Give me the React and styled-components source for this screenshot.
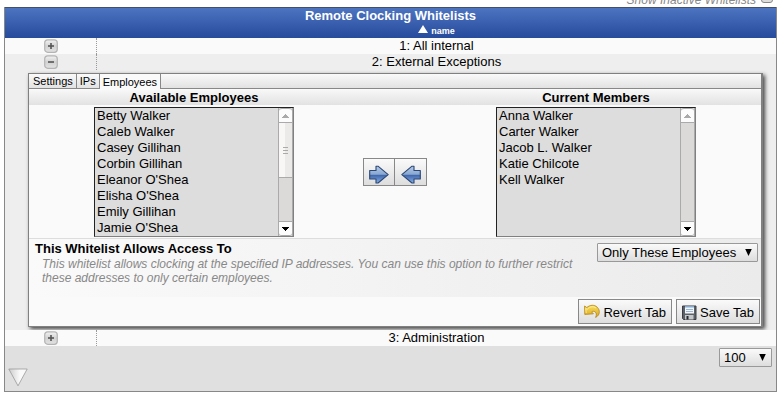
import React, { useState } from 'react';
import styled, { createGlobalStyle } from 'styled-components';

const GlobalStyle = createGlobalStyle`
  *, *::before, *::after {
    box-sizing: border-box;
  }

  body {
    margin: 0;
    background: #fff;
    color: #000;
    font-family: 'Liberation Sans', Arial, Helvetica, sans-serif;
    font-size: 13px;
    line-height: 16px;
  }

  button, select, input {
    margin: 0;
    color: inherit;
    font: inherit;
  }
`;

const Page = styled.main`
  padding: 0 4px;
  overflow: hidden;
`;

const Toolbar = styled.div`
  display: flex;
  justify-content: flex-end;
  align-items: flex-end;
  height: 7px;
`;

const InactiveToggle = styled.label`
  display: flex;
  align-items: flex-end;
  gap: 5px;
  padding-right: 4px;
  color: #888;
  font-size: 12px;
  font-style: italic;
  line-height: 14px;
  white-space: nowrap;
`;

const CheckBox = styled.input`
  appearance: none;
  width: 12px;
  height: 12px;
  margin-bottom: 4px;
  border: 1px solid #888;
  border-radius: 3px;
  background: #ddd;
`;

const Table = styled.table`
  width: 100%;
  border: 1px solid #888;
  border-top: 0;
  border-spacing: 0;
  table-layout: fixed;
`;

const ToggleCol = styled.col`
  width: 92px;
`;

const HeadCell = styled.th`
  height: 31px;
  padding: 0;
  border-top: 1px solid #445068;
  background: linear-gradient(#4c74c0, #264a9c);
  color: #fff;
  font-weight: bold;
`;

const SortLink = styled.a`
  display: flex;
  justify-content: center;
  align-items: center;
  gap: 3px;
  height: 14px;
  padding-left: 92px;
  color: #fff;
  font-size: 9px;
  line-height: 14px;
  text-decoration: none;

  svg {
    margin-bottom: 4px;
  }
`;

const Row = styled.tr`
  background: ${({ $shade }) => ($shade ? '#eee' : '#fafafa')};
`;

const Cell = styled.td`
  height: 16px;
  padding: 0;
  text-align: center;
`;

const ToggleCell = styled(Cell)`
  border-right: 1px dotted #999;
`;

const ToggleButton = styled.button`
  display: block;
  width: 14px;
  height: 14px;
  margin: 0 auto;
  padding: 0;
  border: 0;
  background: none;

  svg {
    display: block;
  }
`;

const DetailCell = styled.td`
  padding: 3px 13px 3px 23px;
  overflow: hidden;
`;

const Panel = styled.section`
  border: 1px solid #808080;
  border-right-width: 2px;
  background: #fafafa;
  box-shadow: 2px 2px 4px #444;
`;

const TabBar = styled.div`
  display: flex;
  height: 15px;
  border-bottom: 1px solid #888;
  background: linear-gradient(#fafafa, #e2e2e2);
`;

const Tab = styled.button`
  height: ${({ $active }) => ($active ? 15 : 14)}px;
  padding: 0 3px;
  border: 0;
  border-right: 1px solid #888;
  background: ${({ $active }) => ($active ? '#fafafa' : 'transparent')};
  font-size: 11px;
  line-height: 14px;

  &:first-child {
    padding-left: 4px;
  }
`;

const Transfer = styled.div`
  display: grid;
  grid-template-columns: 1fr 72px 1fr;
  border-bottom: 1px solid #ddd;
`;

const ListHeading = styled.label`
  height: 16px;
  border-top: 1px solid #fafafa;
  background: linear-gradient(#f7f7f7, #e2e2e2);
  font-weight: bold;
  text-align: center;
`;

const ListSlot = styled.div`
  display: flex;
  justify-content: center;
  align-items: center;
  padding: 2px 0 1px;
`;

const ListBox = styled.div`
  display: flex;
  width: 200px;
  border: 1px solid #222;
  border-right-color: #808080;
  border-bottom-color: #808080;
  background: #ddd;
`;

const List = styled.select`
  flex: 1;
  min-width: 0;
  height: 128px;
  padding: 0;
  border: 0;
  border-radius: 0;
  outline: 0;
  background: #ddd;
  scrollbar-width: none;

  option {
    height: 16px;
    min-height: 16px;
    padding: 0 2px;
    line-height: 16px;
  }
`;

const ScrollBar = styled.div`
  display: flex;
  flex-direction: column;
  width: 15px;
  border: 1px solid #aaa;
  border-top: 0;
  border-bottom: 0;
  background: #dbdad9;
`;

const ScrollEnd = styled.span`
  display: flex;
  justify-content: center;
  align-items: center;
  height: 15px;
  border: 1px solid #aaa;
  border-width: 1px 0;
  border-radius: ${({ $last }) => ($last ? '0 0 3px 3px' : '3px 3px 0 0')};
  background: #fcfcfc;
`;

const ScrollTrack = styled.span`
  flex: 1;
`;

const ScrollThumb = styled.span`
  display: flex;
  justify-content: center;
  align-items: center;
  height: 55px;
  border-bottom: 1px solid #aaa;
  background: linear-gradient(90deg, #f8f7f6 50%, #ebeae9 50%);
`;

const MoveButtons = styled.div`
  display: flex;
`;

const MoveButton = styled.button`
  display: flex;
  justify-content: center;
  align-items: flex-end;
  width: 32px;
  height: 28px;
  padding: 0 0 1px;
  border: 1px solid #888;
  background: linear-gradient(#fafafa, #ddd);

  & + & {
    width: 33px;
    margin-left: -1px;
  }
`;

const Setting = styled.div`
  display: flex;
  align-items: flex-start;
  gap: 8px;
  padding: 2px 3px 12px 6px;
  background: linear-gradient(90deg, #fafafa, #ebebeb);
`;

const SettingText = styled.div`
  flex: 1;
`;

const SettingTitle = styled.label`
  display: block;
  font-weight: bold;
`;

const SettingHelp = styled.p`
  margin: 0;
  padding-left: 7px;
  color: #888;
  font-size: 12px;
  font-style: italic;
  line-height: 14px;
`;

const SelectWrap = styled.div`
  position: relative;
  margin-top: 2px;

  svg {
    position: absolute;
    top: 6px;
    right: 6px;
    pointer-events: none;
  }
`;

const Select = styled.select`
  appearance: none;
  display: block;
  width: ${({ $width }) => $width}px;
  height: 19px;
  padding: 0 18px 0 4px;
  border: 1px solid #999;
  border-radius: 1px;
  background: linear-gradient(#fafafa, #ddd);
`;

const Actions = styled.div`
  display: flex;
  justify-content: flex-end;
  gap: 4px;
  padding: 2px 1px;
`;

const ActionButton = styled.button`
  display: flex;
  align-items: center;
  gap: 3px;
  height: 25px;
  padding: 3px 5px 0;
  border: 1px solid #888;
  background: linear-gradient(#fafafa, #ddd);

  svg {
    margin-bottom: 2px;
  }
`;

const FootCell = styled.td`
  padding: 0 4px 4px 3px;
  background: #e0e0e0;
`;

const Footer = styled.div`
  display: flex;
  justify-content: space-between;
  align-items: flex-start;
`;

const MoreButton = styled.button`
  margin-top: 22px;
  padding: 0;
  border: 0;
  background: none;

  svg {
    display: block;
  }
`;

const Toggle = ({ open, label }) => (
  <ToggleButton type="button" aria-label={label} aria-expanded={open}>
    <svg width="14" height="14" viewBox="0 0 14 14">
      <defs>
        <linearGradient id="toggleFill" x1="0" y1="0" x2="0" y2="1">
          <stop offset="0" stopColor="#f2f2f2" />
          <stop offset="0.5" stopColor="#d2d2d2" />
          <stop offset="1" stopColor="#e2e2e2" />
        </linearGradient>
      </defs>
      <rect x=".7" y=".9" width="12.600" height="12.400" rx="3" fill="url(#toggleFill)" stroke="#b4b4b4" strokeWidth="1.200" />
      <path d="M4 7h6" stroke="#555" strokeWidth="1.6" />
      {!open && <path d="M7 4v6" stroke="#555" strokeWidth="1.6" />}
    </svg>
  </ToggleButton>
);

const DropArrow = () => (
  <svg width="7" height="7" viewBox="0 0 7 7">
    <path d="M.2 0h6.600L3.500 7z" fill="#000" />
  </svg>
);

const ScrollArrow = ({ down }) => (
  <svg width="7" height="4" viewBox="0 0 7 4" shapeRendering="crispEdges">
    {down
      ? <path d="M0 0h7v1H0zM1 1h5v1H1zM2 2h3v1H2zM3 3h1v1H3z" fill="#000" />
      : <path d="M3 0h1v1H3zM2 1h3v1H2zM1 2h5v1H1zM0 3h7v1H0z" fill="#aaa" />}
  </svg>
);

const MoveArrow = ({ left }) => (
  <svg width="20" height="19" viewBox="0 0 20 19">
    <defs>
      <linearGradient id="moveFill" x1="0" y1="0" x2="0" y2="1">
        <stop offset="0" stopColor="#b4cbe6" />
        <stop offset="0.48" stopColor="#8aa8d2" />
        <stop offset="0.54" stopColor="#4268ac" />
        <stop offset="0.75" stopColor="#5f88c6" />
        <stop offset="1" stopColor="#86aee0" />
      </linearGradient>
    </defs>
    <path
      d="M.7 5.5H7V1.200h2L19.200 9.600 9 18H7V14H.7z"
      transform={left ? 'translate(20 0) scale(-1 1)' : undefined}
      fill="url(#moveFill)"
      stroke="#2a4674"
      strokeWidth="1.100"
      strokeLinejoin="round"
    />
  </svg>
);

const RevertIcon = () => (
  <svg width="16" height="16" viewBox="0 0 16 16">
    <defs>
      <linearGradient id="revertFill" x1="0" y1="0" x2="0" y2="1">
        <stop offset="0" stopColor="#f8df5c" />
        <stop offset="1" stopColor="#d8a422" />
      </linearGradient>
    </defs>
    <path
      d="M.6 2L2.800 3.600C6 .6 10.500.6 13.200 3.200c3.200 3.200 2.800 8-1.600 10.200 1.200-2.600 1-4.600-.6-5.600-1-.7-2.200-.7-3.400.1L9.400 9.800.8 10.400z"
      fill="url(#revertFill)"
      stroke="#b98a1c"
      strokeWidth=".9"
      strokeLinejoin="round"
    />
    <path d="M2.200 9L1.700 4.300 3.200 5.400C6 2.400 9.500 2 12 4" fill="none" stroke="#fff3a8" strokeWidth=".8" />
  </svg>
);

const SaveIcon = () => (
  <svg width="15" height="15" viewBox="0 0 15 15">
    <path d="M.5 1h13.500v13.500H1.500L.5 13.500z" fill="#5c6168" stroke="#3a3e44" />
    <path d="M3 1h9v7.500H3z" fill="#f2f6fa" />
    <path d="M3 1h9v1.500H3z" fill="#86a9cc" />
    <path d="M4 4.500h7M4 6.500h7" stroke="#9bb8d2" />
    <path d="M3 10h8.500v4.500H3z" fill="#c4c7ca" />
    <path d="M4.500 11h2v3.500h-2z" fill="#25282c" />
  </svg>
);

const MemberList = ({ id, names, thumb }) => (
  <ListSlot>
    <ListBox>
      <List id={id} multiple size={8}>
        {names.map((name) => <option key={name}>{name}</option>)}
      </List>
      <ScrollBar aria-hidden="true">
        <ScrollEnd><ScrollArrow /></ScrollEnd>
        {thumb && (
          <ScrollThumb>
            <svg width="5" height="7" viewBox="0 0 5 7">
              <path d="M0 .5h5M0 3.500h5M0 6.500h5" stroke="#aaa" />
            </svg>
          </ScrollThumb>
        )}
        <ScrollTrack />
        <ScrollEnd $last><ScrollArrow down /></ScrollEnd>
      </ScrollBar>
    </ListBox>
  </ListSlot>
);

const tabs = ['Settings', 'IPs', 'Employees'];

const available = [
  'Betty Walker',
  'Caleb Walker',
  'Casey Gillihan',
  'Corbin Gillihan',
  "Eleanor O'Shea",
  "Elisha O'Shea",
  'Emily Gillihan',
  "Jamie O'Shea",
];

const members = [
  'Anna Walker',
  'Carter Walker',
  'Jacob L. Walker',
  'Katie Chilcote',
  'Kell Walker',
];

const EmployeesPanel = () => {
  const [tab, setTab] = useState('Employees');
  return (
    <Panel>
      <TabBar role="tablist">
        {tabs.map((name) => (
          <Tab
            key={name}
            type="button"
            role="tab"
            aria-selected={tab === name}
            $active={tab === name}
            onClick={() => setTab(name)}
          >
            {name}
          </Tab>
        ))}
      </TabBar>
      <Transfer>
        <ListHeading htmlFor="available">Available Employees</ListHeading>
        <ListHeading as="div" />
        <ListHeading htmlFor="members">Current Members</ListHeading>
        <MemberList id="available" names={available} thumb />
        <ListSlot>
          <MoveButtons>
            <MoveButton type="button" aria-label="Add to members"><MoveArrow /></MoveButton>
            <MoveButton type="button" aria-label="Remove from members"><MoveArrow left /></MoveButton>
          </MoveButtons>
        </ListSlot>
        <MemberList id="members" names={members} />
      </Transfer>
      <Setting>
        <SettingText>
          <SettingTitle htmlFor="access">This Whitelist Allows Access To</SettingTitle>
          <SettingHelp>
            This whitelist allows clocking at the specified IP addresses. You can use this option
            to further restrict these addresses to only certain employees.
          </SettingHelp>
        </SettingText>
        <SelectWrap>
          <Select id="access" $width={161}>
            <option>Only These Employees</option>
          </Select>
          <DropArrow />
        </SelectWrap>
      </Setting>
      <Actions>
        <ActionButton type="button">
          <RevertIcon />
          Revert Tab
        </ActionButton>
        <ActionButton type="button">
          <SaveIcon />
          Save Tab
        </ActionButton>
      </Actions>
    </Panel>
  );
};

const App = () => (
  <>
    <GlobalStyle />
    <Page>
      <Toolbar>
        <InactiveToggle>
          Show Inactive Whitelists
          <CheckBox type="checkbox" />
        </InactiveToggle>
      </Toolbar>
      <Table>
        <colgroup>
          <ToggleCol />
          <col />
        </colgroup>
        <thead>
          <tr>
            <HeadCell colSpan={2}>
              Remote Clocking Whitelists
              <SortLink href="#name">
                <svg width="10" height="8" viewBox="0 0 10 8">
                  <path d="M5 0l5 8H0z" fill="#fff" />
                </svg>
                name
              </SortLink>
            </HeadCell>
          </tr>
        </thead>
        <tbody>
          <Row>
            <ToggleCell><Toggle label="Expand All internal" open={false} /></ToggleCell>
            <Cell>1: All internal</Cell>
          </Row>
          <Row $shade>
            <ToggleCell><Toggle label="Collapse External Exceptions" open /></ToggleCell>
            <Cell>2: External Exceptions</Cell>
          </Row>
          <Row $shade>
            <DetailCell colSpan={2}><EmployeesPanel /></DetailCell>
          </Row>
          <Row>
            <ToggleCell><Toggle label="Expand Administration" open={false} /></ToggleCell>
            <Cell>3: Administration</Cell>
          </Row>
        </tbody>
        <tfoot>
          <tr>
            <FootCell colSpan={2}>
              <Footer>
                <MoreButton type="button" aria-label="More rows">
                  <svg width="20" height="19" viewBox="0 0 20 19">
                    <defs>
                      <linearGradient id="moreFill">
                        <stop offset="0" stopColor="#ccc" />
                        <stop offset="0.6" stopColor="#fafafa" />
                      </linearGradient>
                    </defs>
                    <path d="M.8 1h18.400L10 17.800z" fill="url(#moreFill)" stroke="#999" strokeWidth=".8" />
                  </svg>
                </MoreButton>
                <SelectWrap>
                  <Select $width={53} aria-label="Rows per page">
                    <option>100</option>
                  </Select>
                  <DropArrow />
                </SelectWrap>
              </Footer>
            </FootCell>
          </tr>
        </tfoot>
      </Table>
    </Page>
  </>
);

export default App;
